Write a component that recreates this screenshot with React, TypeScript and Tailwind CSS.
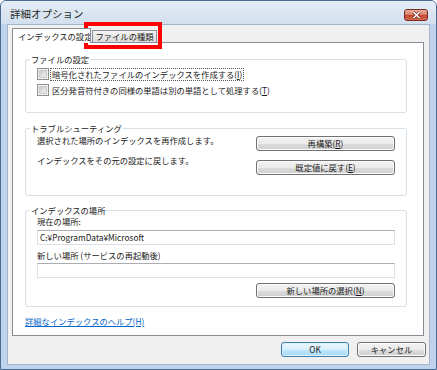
import type { ReactNode } from "react";

const FONT = "font-['Noto_Sans_CJK_JP','Noto_Sans',sans-serif]";

function Btn({ children, className = "", primary = false }: { children: ReactNode; className?: string; primary?: boolean }) {
  return (
    <div
      className={`flex h-[15px] items-center justify-center rounded-[3px] border text-[8.3px] leading-[11px] text-[#1a1a1a] ${
        primary
          ? "border-[#3c7fb1] bg-[linear-gradient(#eaf6fd_0%,#d9f0fc_50%,#bee6fd_51%,#a7d9f5_100%)] shadow-[inset_0_0_0_1px_#dff1fb]"
          : "border-[#707070] bg-[linear-gradient(#f2f2f2_0%,#ebebeb_50%,#dddddd_51%,#cfcfcf_100%)] shadow-[inset_0_0_0_1px_#fbfbfb]"
      } ${className}`}
    >
      {children}
    </div>
  );
}

function Group({ label, className = "", children }: { label: string; className?: string; children: ReactNode }) {
  return (
    <div className={`relative mx-[12px] mr-[16px] rounded-[3px] border border-[#d5dfe5] ${className}`}>
      <span className="absolute left-[4px] top-[-6px] bg-white px-[1px] text-[8.3px] leading-[11px] text-[#1a1a1a]">
        {label}
      </span>
      {children}
    </div>
  );
}

function Check({ children, focused = false }: { children: ReactNode; focused?: boolean }) {
  return (
    <div className="flex h-[16px] items-center gap-[2px]">
      <div className="flex h-[12px] w-[12px] items-center justify-center border border-[#8e8f8f] bg-[#f4f4f4]">
        <div className="h-[8px] w-[8px] border border-[#c8c8c8] bg-[linear-gradient(135deg,#cbcbcb,#f0f0f0)]" />
      </div>
      <span
        className={`px-[1px] text-[8.3px] leading-[11px] text-[#1a1a1a] ${
          focused ? "outline outline-1 outline-dotted outline-[#555]" : ""
        }`}
      >
        {children}
      </span>
    </div>
  );
}

function Field({ value = "" }: { value?: string }) {
  return (
    <div className="flex h-[15px] items-center border border-[#dbdfe6] border-t-[#abadb3] bg-white pl-[2px] text-[8.3px] leading-[11px] text-[#1a1a1a]">
      {value}
    </div>
  );
}

export default function App() {
  return (
    <div className={`relative flex h-[370px] w-[437px] flex-col overflow-hidden rounded-t-[6px] border border-[#4a6a92] bg-[#bfd4ec] ${FONT}`}>
      {/* Title bar */}
      <div className="flex h-[23px] shrink-0 items-start justify-between bg-[linear-gradient(#e5edf6,#d2dfee)] pl-[9px] pr-[8px]">
        <span className="pt-[6px] text-[10.5px] leading-[13px] text-[#2b2b2b]">詳細オプション</span>
        <div className="mt-[8px] flex h-[12px] w-[24px] items-center justify-center rounded-[3px] border border-[#7a2a1e] bg-[linear-gradient(#eab0a2_0%,#d97a64_50%,#c2432b_51%,#d06a4c_100%)]">
          <svg width="9" height="8" viewBox="0 0 9 8">
            <path d="M1.5 1 L7.5 7 M7.5 1 L1.5 7" stroke="#5a1a10" strokeWidth="2.6" />
            <path d="M1.5 1 L7.5 7 M7.5 1 L1.5 7" stroke="#fff" strokeWidth="1.6" />
          </svg>
        </div>
      </div>

      {/* Client area */}
      <div className="ml-[6px] mr-[6px] mb-[4px] flex flex-1 flex-col border border-[#a3b5cb] bg-[#f0f0f0] pl-[4px] pr-[5px] pb-[7px]">
        {/* Tabs */}
        <div className="flex h-[17px] shrink-0 items-end">
          <div className="relative z-10 mb-[-1px] flex h-[15px] w-[79px] items-center overflow-hidden whitespace-nowrap border border-b-0 border-[#898c95] bg-white pl-[5px] pt-[1px] text-[8.3px] leading-[11px] text-[#1a1a1a]">
            インデックスの設定
          </div>
          <div className="ml-[1px] flex h-[12px] w-[65px] items-center justify-center whitespace-nowrap border border-b-0 border-[#898c95] bg-[linear-gradient(#f3f3f3,#dcdcdc)] text-[8.3px] leading-[11px] text-[#1a1a1a]">
            ファイルの種類
          </div>
        </div>

        {/* Tab panel */}
        <div className="flex h-[294px] shrink-0 flex-col border border-[#898c95] bg-white">
          <Group label="ファイルの設定" className="mt-[16px] pl-[11px] pt-[6px] pb-[14px]">
            <Check focused>
              暗号化されたファイルのインデックスを作成する(<u>I</u>)
            </Check>
            <Check>
              区分発音符付きの同様の単語は別の単語として処理する(<u>T</u>)
            </Check>
          </Group>

          <Group label="トラブルシューティング" className="mt-[15px] px-[11px] pt-[7px] pb-[20px]">
            <div className="flex items-start justify-between">
              <span className="mt-[-1px] text-[8.3px] leading-[11px] text-[#1a1a1a]">
                選択された場所のインデックスを再作成します。
              </span>
              <Btn className="w-[139px]">
                再構築(<u>R</u>)
              </Btn>
            </div>
            <div className="mt-[9px] flex items-start justify-between">
              <span className="mt-[-5px] text-[8.3px] leading-[11px] text-[#1a1a1a]">
                インデックスをその元の設定に戻します。
              </span>
              <Btn className="w-[139px]">
                既定値に戻す(<u>E</u>)
              </Btn>
            </div>
          </Group>

          <Group label="インデックスの場所" className="mt-[14px] px-[11px] pt-[5px] pb-[8px]">
            <div className="text-[8.3px] leading-[11px] text-[#1a1a1a]">現在の場所:</div>
            <div className="mt-[3px]">
              <Field value="C:¥ProgramData¥Microsoft" />
            </div>
            <div className="mt-[5px] text-[8.3px] leading-[11px] text-[#1a1a1a]">新しい場所 (サービスの再起動後)</div>
            <div className="mt-[2px]">
              <Field />
            </div>
            <div className="mt-[5px] flex justify-end">
              <Btn className="w-[139px]">
                新しい場所の選択(<u>N</u>)
              </Btn>
            </div>
          </Group>

          <div className="ml-[12px] mt-[9px] text-[8.3px] leading-[11px] text-[#0066cc] underline">
            詳細なインデックスのヘルプ(H)
          </div>
        </div>

        {/* Dialog buttons */}
        <div className="mr-[-2px] mt-[6px] flex justify-end gap-[8px]">
          <Btn primary className="w-[68px]">
            OK
          </Btn>
          <Btn className="w-[69px]">キャンセル</Btn>
        </div>
      </div>

      {/* Highlight annotation */}
      <div className="absolute left-[83px] top-[21px] h-[27px] w-[78px] border-[4px] border-[#ff0000]" />
    </div>
  );
}
